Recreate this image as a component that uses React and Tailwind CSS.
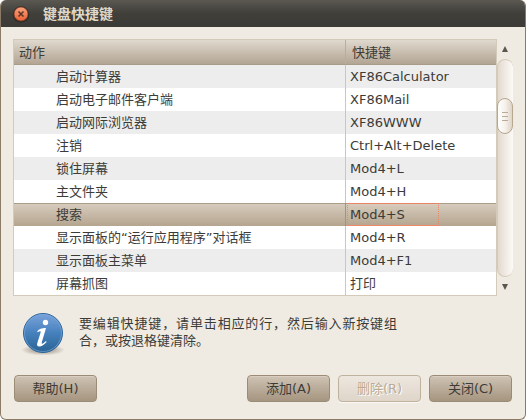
import React from "react";

const shortcuts = [
  ["启动计算器", "XF86Calculator"],
  ["启动电子邮件客户端", "XF86Mail"],
  ["启动网际浏览器", "XF86WWW"],
  ["注销", "Ctrl+Alt+Delete"],
  ["锁住屏幕", "Mod4+L"],
  ["主文件夹", "Mod4+H"],
  ["搜索", "Mod4+S"],
  ["显示面板的“运行应用程序”对话框", "Mod4+R"],
  ["显示面板主菜单", "Mod4+F1"],
  ["屏幕抓图", "打印"],
];
const selected = 6;

function TitleBar() {
  return (
    <header className="flex h-[27px] items-center gap-3 bg-linear-to-b from-[#5a5851] via-[#403f3a] to-[#3b3a36] pl-3">
      <button aria-label="关闭窗口" className="size-4 shrink-0">
        <svg viewBox="0 0 16 16" className="size-4 overflow-visible">
          <defs>
            <linearGradient id="close" x1="0" y1="0" x2="0" y2="1">
              <stop offset="0" stopColor="#f9a27e" />
              <stop offset="1" stopColor="#ec6133" />
            </linearGradient>
          </defs>
          <circle cx="8" cy="8.5" r="8.3" fill="#2d2c29" />
          <circle cx="8" cy="8" r="7" fill="url(#close)" stroke="#7a3c25" strokeWidth=".7" />
          <path d="M5.5 5.5l5 5M10.5 5.5l-5 5" stroke="#5a3426" strokeWidth="1.5" />
        </svg>
      </button>
      <h1 className="ml-0.5 text-[14px] leading-5 font-bold text-[#dfd8c8]">键盘快捷键</h1>
    </header>
  );
}

function ShortcutTable() {
  return (
    <div className="min-w-0 flex-1 border border-[#d3cab9] bg-white">
      <table className="w-full table-fixed border-separate border-spacing-0 text-left">
        <thead>
          <tr className="h-[25px] bg-linear-to-b from-[#e0d9cf] via-[#c8bdae] to-[#b1a392]">
            <th className="border-b border-[#a99b88] p-0 pl-[5px] font-normal">动作</th>
            <th className="w-[151px] border-b border-l border-b-[#a99b88] border-l-[#b9ad9c] p-0 pl-[6px] font-normal">快捷键</th>
          </tr>
        </thead>
        <tbody>
          {shortcuts.map(([action, key], i) => {
            const active = i === selected;
            return (
              <tr
                key={action}
                aria-selected={active}
                className={
                  "h-[23px] " +
                  (active
                    ? "bg-linear-to-b from-[#d8cdbf] to-[#b5a58f] shadow-[inset_0_1px_0_#a99c89]"
                    : i % 2 === 0
                      ? "bg-[#ededed]"
                      : "bg-white")
                }
              >
                <td className="truncate p-0 pl-[42px]">{action}</td>
                <td className={"border-l p-0 " + (active ? "border-[#a09380] pl-px" : "border-[#c9c7c4] pl-1")}>
                  {active ? (
                    <div className="h-[23px] w-[92px] border border-dotted border-[#ec8466] pl-0.5 leading-[21px]">{key}</div>
                  ) : (
                    key
                  )}
                </td>
              </tr>
            );
          })}
        </tbody>
      </table>
    </div>
  );
}

function ScrollBar() {
  return (
    <div className="flex w-4 shrink-0 flex-col">
      <button aria-label="向上滚动" className="flex h-5 items-center justify-center">
        <svg viewBox="0 0 6 6" className="size-1.5">
          <path d="M3 0l3 6H0z" fill="#5c564d" />
        </svg>
      </button>
      <div className="flex-1 rounded-lg border-t border-b border-l border-[#d5cab9] bg-linear-to-r from-[#e3dacf] to-[#fcfaf7] pt-[38px]">
        <div
          role="scrollbar"
          aria-label="滚动"
          aria-valuenow={20}
          className="-ml-px flex h-9 w-4 flex-col items-center justify-center gap-[3px] rounded-lg border border-[#b7a78f] bg-linear-to-r from-white via-[#f6f1eb] to-[#dfd5c8]"
        >
          <span className="h-px w-1.5 bg-[#b9ab97]" />
          <span className="h-px w-1.5 bg-[#b9ab97]" />
          <span className="h-px w-1.5 bg-[#b9ab97]" />
        </div>
      </div>
      <button aria-label="向下滚动" className="flex h-[19px] items-center justify-center">
        <svg viewBox="0 0 6 6" className="size-1.5">
          <path d="M3 6l3-6H0z" fill="#5c564d" />
        </svg>
      </button>
    </div>
  );
}

function InfoIcon() {
  return (
    <svg viewBox="0 0 44 44" className="size-11 shrink-0" aria-hidden="true">
      <defs>
        <linearGradient id="info" x1="0" y1="0" x2="0" y2="1">
          <stop offset="0" stopColor="#7ba3dc" />
          <stop offset=".5" stopColor="#4681bd" />
          <stop offset="1" stopColor="#286292" />
        </linearGradient>
        <radialGradient id="shade">
          <stop offset=".5" stopColor="#9b9082" stopOpacity=".6" />
          <stop offset="1" stopColor="#9b9082" stopOpacity="0" />
        </radialGradient>
      </defs>
      <ellipse cx="22" cy="38" rx="22" ry="5.5" fill="url(#shade)" />
      <circle cx="22" cy="21" r="19.5" fill="url(#info)" stroke="#2c659b" />
      <circle cx="22" cy="21" r="18.5" fill="none" stroke="#7fabdb" strokeOpacity=".6" />
      <circle cx="24.5" cy="10.5" r="2.7" fill="#fff" />
      <path
        d="M16.2 19.2C18.500 17 22 15.800 25 16.200L20.800 30.200C20.400 31.800 21.300 32 22.300 31.200L25 29L25.600 30C23.400 32.700 20.500 34.500 18.200 34.500C16.200 34.500 15.700 33 16.300 31L19.700 20.300C20 19 18.500 19 16.700 20.200Z"
        fill="#fff"
      />
    </svg>
  );
}

function DialogButton({ children, disabled = false }) {
  return (
    <button
      disabled={disabled}
      className={
        "h-[27px] w-[83px] rounded-[4px] border " +
        (disabled
          ? "border-[#bfb29d] bg-linear-to-b from-[#ede7df] to-[#dfd5c9] text-[#b9aa94] shadow-[0_1px_0_#fbf9f5] [text-shadow:1px_1px_0_#fff]"
          : "border-[#9b8c76] bg-linear-to-b from-[#cfc3b4] to-[#a59580] shadow-[inset_0_1px_0_#d8cec1]")
      }
    >
      {children}
    </button>
  );
}

export default function App() {
  return (
    <div className="bg-white">
      <div className="flex min-h-screen flex-col overflow-hidden rounded-[6px] border-x border-b border-[#8b7b66] bg-[#efebe3] font-['DejaVu_Sans','Noto_Sans_CJK_SC',sans-serif] text-[13px] leading-[17px] text-[#3c3b37]">
        <TitleBar />
        <main className="flex flex-1 flex-col px-3 pt-3">
          <div className="flex">
            <ShortcutTable />
            <ScrollBar />
          </div>
          <div className="mt-4 flex items-start gap-3.5 pl-2">
            <InfoIcon />
            <p className="mt-[3px] w-[318px] text-justify">
              要编辑快捷键，请单击相应的行，然后输入新按键组合，或按退格键清除。
            </p>
          </div>
          <footer className="mt-[19px] flex gap-2 px-px pb-[17px]">
            <DialogButton>帮助(H)</DialogButton>
            <div className="ml-auto flex gap-2">
              <DialogButton>添加(A)</DialogButton>
              <DialogButton disabled>删除(R)</DialogButton>
              <DialogButton>关闭(C)</DialogButton>
            </div>
          </footer>
        </main>
      </div>
    </div>
  );
}
